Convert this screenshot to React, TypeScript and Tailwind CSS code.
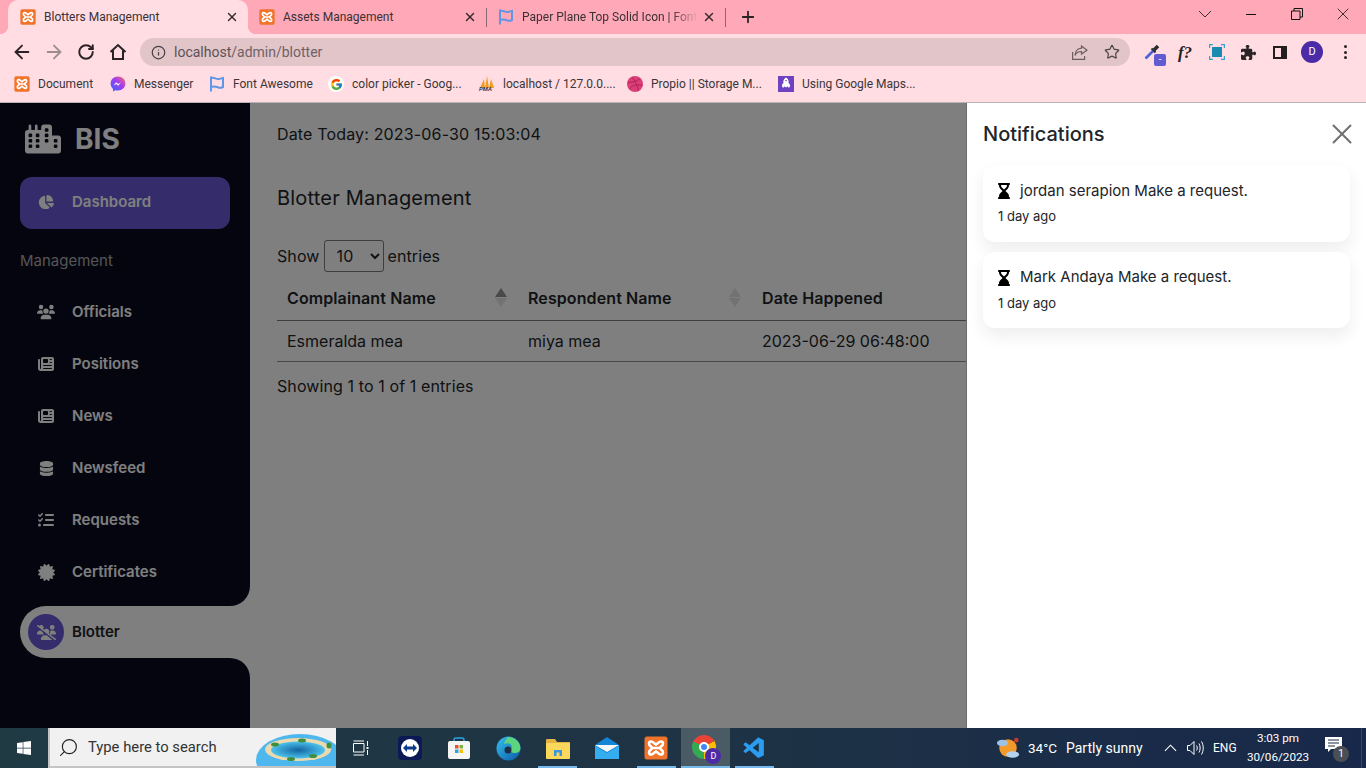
import { ArrowLeft, ArrowRight, Info, Plus, RotateCw, Search, Star, X } from "lucide-react";
import {
  FaCertificate,
  FaChartPie,
  FaCity,
  FaDatabase,
  FaHourglassEnd,
  FaListCheck,
  FaNewspaper,
  FaPuzzlePiece,
  FaRocket,
  FaUsers,
  FaUsersSlash,
  FaWindows,
} from "react-icons/fa6";
import { FcGoogle } from "react-icons/fc";
import { VscVscode } from "react-icons/vsc";

function Xampp({ size = 16 }: { size?: number }) {
  return (
    <svg width={size} height={size} viewBox="0 0 24 24" className="shrink-0">
      <rect x="0.5" y="0.5" width="23" height="23" rx="2.5" fill="#f0742b" />
      <path
        d="M7 5.5C4.5 5.5 4.5 9 6.5 10L8.5 12L6.5 14C4.5 15 4.5 18.5 7 18.5C9 18.5 10 16.5 12 15.5C14 16.5 15 18.5 17 18.5C19.5 18.5 19.5 15 17.5 14L15.5 12L17.5 10C19.5 9 19.5 5.5 17 5.5C15 5.5 14 7.5 12 8.5C10 7.5 9 5.5 7 5.5ZM8 12H16"
        fill="none"
        stroke="#fff"
        strokeWidth="2.6"
      />
    </svg>
  );
}

function FaFlag() {
  return (
    <svg width="16" height="16" viewBox="0 0 16 16" className="shrink-0" fill="none" stroke="#5f96e6" strokeWidth="2">
      <path d="M2 .5V15.500M2 2C5 .8 7 3.500 10 3 11.500 2.800 13 2.300 14 2V11C12.500 11.800 11 12 9.500 11.500 7 10.500 4.500 10.200 2 11" />
    </svg>
  );
}

function Messenger() {
  return (
    <svg width="16" height="16" viewBox="0 0 16 16" className="shrink-0">
      <defs>
        <linearGradient id="msg" x1="0" y1="1" x2="1" y2="0">
          <stop offset="0" stopColor="#2f6bff" />
          <stop offset="0.55" stopColor="#a33bf0" />
          <stop offset="1" stopColor="#ff6a6a" />
        </linearGradient>
      </defs>
      <path d="M8 .5C3.800.5.6 3.500.6 7.600c0 2.200.9 4 2.400 5.300V15.500l2.300-1.300c.8.3 1.700.4 2.700.4 4.200 0 7.400-3 7.400-7S12.200.5 8 .5Z" fill="url(#msg)" />
      <path d="M3.500 9.800 6 6.200l2.300 1.700 2.600-1.700-2.500 3.600-2.300-1.700Z" fill="#fff" />
    </svg>
  );
}

function Dribbble() {
  return (
    <svg width="16" height="16" viewBox="0 0 16 16" className="shrink-0" fill="none">
      <circle cx="8" cy="8" r="8" fill="#dc3d78" />
      <path d="M5 1C8 4.500 10.500 9.500 11.500 15M1 6.500C5 6.500 9.500 5.800 13 2.500M2.500 13C4.500 9.500 9 8 15.500 9.500" stroke="#a9224f" strokeWidth="0.9" />
    </svg>
  );
}

function Pma() {
  return (
    <div className="relative h-4 w-4 shrink-0">
      <svg width="16" height="12" viewBox="0 0 16 12">
        <path d="M1 12 5 3 6 12ZM6 12 8 0 10 12ZM10 12 12 3 15 12Z" fill="#f39a1f" />
      </svg>
      <span className="absolute left-0 top-[10px] text-[6px] leading-[6px] font-bold italic text-[#33416b]">PMA</span>
    </div>
  );
}

function Bookmark({ icon, label, w }: { icon: React.ReactNode; label: string; w: string }) {
  return (
    <div className={`flex items-center gap-2 ${w}`}>
      <div className="flex w-4 justify-center">{icon}</div>
      <span className="whitespace-nowrap text-[12px] text-[#3b3538]">{label}</span>
    </div>
  );
}

function Tab({ title, active, fade, w }: { title: string; active?: boolean; fade?: boolean; w: string }) {
  return (
    <div className={`relative flex h-[34px] items-center pr-[9px] ${w} ${active ? "rounded-t-[10px] bg-[#ffdde3] pl-3" : "pl-[11px]"}`}>
      {active && (
        <>
          <span className="absolute -left-2 bottom-0 h-2 w-2 bg-[radial-gradient(circle_at_0_0,transparent_8px,#ffdde3_8px)]" />
          <span className="absolute -right-2 bottom-0 h-2 w-2 bg-[radial-gradient(circle_at_100%_0,transparent_8px,#ffdde3_8px)]" />
        </>
      )}
      {fade ? <FaFlag /> : <Xampp />}
      <span
        className={`ml-2 flex-1 overflow-hidden whitespace-nowrap text-[12px] text-[#3a3033] ${
          fade ? "[mask-image:linear-gradient(to_right,#000_85%,transparent)]" : ""
        }`}
      >
        {title}
      </span>
      <X size={14} strokeWidth={2.4} className="ml-1 shrink-0 text-[#33292c]" />
    </div>
  );
}

function ToolSlot({ children, w = "w-8" }: { children: React.ReactNode; w?: string }) {
  return <div className={`flex shrink-0 items-center justify-center ${w}`}>{children}</div>;
}

function BrowserChrome() {
  return (
    <header className="shrink-0 font-['Roboto',sans-serif]">
      <div className="flex h-[34px] items-start bg-[#ffa8b8] pl-2">
        <Tab title="Blotters Management" active w="w-[240px]" />
        <Tab title="Assets Management" w="w-[238px]" />
        <div className="mt-[8px] h-[19px] w-px bg-[#8a6a70]" />
        <Tab title="Paper Plane Top Solid Icon | Font" fade w="w-[238px]" />
        <div className="mt-[8px] h-[19px] w-px bg-[#8a6a70]" />
        <div className="flex h-[34px] w-[44px] items-center justify-center">
          <Plus size={18} strokeWidth={2.4} className="text-[#2a2326]" />
        </div>
        <div className="ml-auto flex h-[28px] items-center text-[#2c2326]">
          <div className="flex w-[46px] justify-center">
            <svg width="14" height="8" viewBox="0 0 14 8" fill="none" stroke="#3a2f32">
              <path d="M1 1 7 7 13 1" />
            </svg>
          </div>
          <div className="flex w-[46px] justify-center">
            <span className="h-px w-[10px] bg-[#111]" />
          </div>
          <div className="flex w-[46px] justify-center">
            <svg width="12" height="12" viewBox="0 0 12 12" fill="none" stroke="#111">
              <path d="M.5 3H9V11.500H.5ZM3 3V.5H11.500V9H9" />
            </svg>
          </div>
          <div className="flex w-[46px] justify-center">
            <X size={20} strokeWidth={1.1} />
          </div>
        </div>
      </div>

      <div className="flex h-[34px] items-center bg-[#ffdde3] pt-[2px] pl-[6px]">
        <ToolSlot>
          <ArrowLeft size={22} strokeWidth={2} className="text-[#2b2226]" />
        </ToolSlot>
        <ToolSlot>
          <ArrowRight size={22} strokeWidth={2} className="text-[#9e8c91]" />
        </ToolSlot>
        <ToolSlot>
          <RotateCw size={18} strokeWidth={2.6} className="text-[#2b2226]" />
        </ToolSlot>
        <ToolSlot>
          <svg width="18" height="18" viewBox="0 0 18 18" fill="none" stroke="#2b2226" strokeWidth="2">
            <path d="M1.500 9 9 2l7.500 7M4 7.500V16h10V7.500" />
          </svg>
        </ToolSlot>
        <div className="ml-[6px] flex h-7 w-[990px] items-center rounded-full bg-[#e1c5c9] pl-[11px] pr-[10px]">
          <Info size={15} strokeWidth={2} className="text-[#4a4043]" />
          <span className="ml-[8px] text-[14px] text-[#5e5155]">
            localhost<span className="text-[#6f6165]">/admin/blotter</span>
          </span>
          <svg width="16" height="15" viewBox="0 0 16 15" fill="none" stroke="#6b5f62" strokeWidth="1.200" className="ml-auto">
            <path d="M.6 7v7.400h12V11M9.500 1l5.500 4.200L9.500 9V6.500C6 6.500 4 8 3 10.500 3 6.500 5.500 3.500 9.500 3.200Z" />
          </svg>
          <Star size={16} strokeWidth={1.8} className="ml-4 text-[#4f4447]" />
        </div>
        <div className="flex flex-1 items-center pl-[7px]">
          <ToolSlot>
            <div className="relative h-[22px] w-[22px]">
              <svg width="16" height="16" viewBox="0 0 16 16" fill="none" className="absolute left-[2px] top-[3px]">
                <path d="M1.500 14.500 9 7" stroke="#4c63d8" strokeWidth="2.600" />
                <path d="M7.500 4.500 11.500 8.500" stroke="#2b2b33" strokeWidth="2" />
                <path d="M10 6 14 2" stroke="#2b2b33" strokeWidth="3.600" />
              </svg>
              <span className="absolute left-[12px] top-[13px] flex h-3 w-3 items-center justify-center rounded-[2px] bg-[#625ad0] text-[8px] font-bold leading-none text-white">-</span>
            </div>
          </ToolSlot>
          <ToolSlot>
            <span className="font-['Liberation_Serif',serif] text-[17px] font-bold italic leading-none text-[#222]">f?</span>
          </ToolSlot>
          <ToolSlot w="w-[31px]">
            <svg width="16" height="16" viewBox="0 0 16 16" fill="none" stroke="#3aa0c8" strokeWidth="1.200">
              <path d="M.6 4V.6H4M12 .6h3.400V4M15.400 12v3.400H12M4 15.400H.6V12" />
              <rect x="3" y="3" width="10" height="10" fill="#1a8bb0" stroke="none" />
            </svg>
          </ToolSlot>
          <ToolSlot>
            <FaPuzzlePiece size={15} className="text-[#2a2326]" />
          </ToolSlot>
          <ToolSlot>
            <div className="h-[13px] w-[14px] border-2 border-r-[6px] border-[#241e21] bg-[#ffdde3]" />
          </ToolSlot>
          <ToolSlot>
            <div className="flex h-[22px] w-[22px] items-center justify-center rounded-full bg-[#4c2ba6] text-[11px] text-white">D</div>
          </ToolSlot>
          <ToolSlot w="w-[34px]">
            <div className="flex flex-col gap-[2.500px]">
              <span className="h-[3px] w-[3px] rounded-full bg-[#2a2326]" />
              <span className="h-[3px] w-[3px] rounded-full bg-[#2a2326]" />
              <span className="h-[3px] w-[3px] rounded-full bg-[#2a2326]" />
            </div>
          </ToolSlot>
        </div>
      </div>

      <div className="flex h-[35px] items-center border-b border-[#bcb2b5] bg-[#ffdde3] pb-[2px] pl-[14px]">
        <Bookmark icon={<Xampp />} label="Document" w="w-[96px]" />
        <Bookmark icon={<Messenger />} label="Messenger" w="w-[99px]" />
        <Bookmark icon={<FaFlag />} label="Font Awesome" w="w-[119px]" />
        <Bookmark
          icon={
            <span className="flex h-4 w-4 items-center justify-center rounded-full bg-white">
              <FcGoogle size={13} />
            </span>
          }
          label="color picker - Goog..."
          w="w-[151px]"
        />
        <Bookmark icon={<Pma />} label="localhost / 127.0.0...." w="w-[148px]" />
        <Bookmark icon={<Dribbble />} label="Propio || Storage M..." w="w-[151px]" />
        <Bookmark
          icon={
            <span className="flex h-4 w-4 items-center justify-center bg-[#6f42c1]">
              <FaRocket size={10} className="-rotate-45 text-white" />
            </span>
          }
          label="Using Google Maps..."
          w="w-[150px]"
        />
      </div>
    </header>
  );
}

function NavItem({ icon, label }: { icon: React.ReactNode; label: string }) {
  return (
    <div className="flex h-[52px] items-center pl-5">
      <div className="flex w-[52px] justify-center text-white">{icon}</div>
      <span className="text-[15px] font-semibold text-white">{label}</span>
    </div>
  );
}

function Sidebar() {
  return (
    <aside className="flex w-[250px] shrink-0 flex-col">
      <div className="rounded-br-[20px] bg-[#0b0b20] pb-[8px]">
        <div className="flex h-[74px] items-center pb-[3px] pl-[25px]">
          <FaCity size={36} className="text-white" />
          <span className="ml-[14px] text-[28px] font-bold leading-none text-white">BIS</span>
        </div>
        <div className="mx-5 flex h-[52px] items-center rounded-xl bg-[#6a5bd6] pb-[2px]">
          <div className="flex w-[52px] justify-center text-white">
            <FaChartPie size={16} />
          </div>
          <span className="text-[15px] font-semibold text-white">Dashboard</span>
        </div>
        <p className="flex h-[57px] items-center pl-5 pt-[7px] text-[15px] text-[#aaa]">Management</p>
        <NavItem icon={<FaUsers size={18} />} label="Officials" />
        <NavItem icon={<FaNewspaper size={16} />} label="Positions" />
        <NavItem icon={<FaNewspaper size={16} />} label="News" />
        <NavItem icon={<FaDatabase size={15} />} label="Newsfeed" />
        <NavItem icon={<FaListCheck size={16} />} label="Requests" />
        <NavItem icon={<FaCertificate size={17} />} label="Certificates" />
      </div>
      <div className="flex h-[52px] bg-[#0b0b20]">
        <div className="ml-5 flex flex-1 items-center rounded-l-[26px] bg-white pl-2">
          <div className="flex h-9 w-9 items-center justify-center rounded-full bg-[#6a5bd6] text-white">
            <FaUsersSlash size={19} />
          </div>
          <span className="ml-2 text-[15px] font-semibold text-[#212529]">Blotter</span>
        </div>
      </div>
      <div className="flex-1 rounded-tr-[20px] bg-[#0b0b20]" />
    </aside>
  );
}

function SortArrows({ active }: { active?: boolean }) {
  return (
    <div className="absolute right-[11px] top-[12px] flex flex-col gap-px">
      <div className={`h-0 w-0 border-x-[6px] border-b-[9px] border-x-transparent ${active ? "border-b-[#212529]/50" : "border-b-[#212529]/12"}`} />
      <div className="h-0 w-0 border-x-[6px] border-t-[9px] border-x-transparent border-t-[#212529]/12" />
    </div>
  );
}

function Main() {
  return (
    <main className="flex-1 overflow-hidden pl-[27px] text-base text-[#212529]">
      <p className="pt-[19px] leading-6 tracking-[0.16px]">Date Today: 2023-06-30 15:03:04</p>
      <h2 className="mt-[40px] text-[20px] leading-6 tracking-[0.2px]">Blotter Management</h2>
      <div className="mt-[30px] flex h-8 items-center tracking-[0.1px]">
        <span>Show</span>
        <select defaultValue="10" className="ml-1 mr-1 h-8 w-[60px] rounded-[3px] border border-[#212529]/60 pl-2">
          <option>10</option>
        </select>
        <span>entries</span>
      </div>
      <table className="mt-[4px] w-[860px] table-fixed border-collapse">
        <thead>
          <tr className="h-[44px] border-b border-[#212529]/60 text-left tracking-[0.1px]">
            <th className="relative w-[241px] pl-[10px] font-semibold">Complainant Name<SortArrows active /></th>
            <th className="relative w-[234px] pl-[10px] font-semibold">Respondent Name<SortArrows /></th>
            <th className="pl-[10px] font-semibold">Date Happened</th>
          </tr>
        </thead>
        <tbody>
          <tr className="h-[41px] border-b border-[#212529]/50">
            <td className="pl-[10px]">Esmeralda mea</td>
            <td className="pl-[10px]">miya mea</td>
            <td className="pl-[10px]">2023-06-29 06:48:00</td>
          </tr>
        </tbody>
      </table>
      <p className="mt-[12px] leading-6 tracking-[0.1px]">Showing 1 to 1 of 1 entries</p>
    </main>
  );
}

function NotificationCard({ text }: { text: string }) {
  return (
    <div className="h-[76.5px] rounded-xl bg-white px-[15px] pt-[14px] shadow-[0_8px_16px_rgba(33,37,41,0.08)]">
      <div className="flex h-[24px] items-center">
        <FaHourglassEnd size={16} className="-ml-[2px] text-black" />
        <span className="ml-2 text-[15px] text-[#212529]">{text}</span>
      </div>
      <p className="mt-[3px] text-[13px] leading-5 text-[#212529]">1 day ago</p>
    </div>
  );
}

function Offcanvas() {
  return (
    <div className="absolute inset-y-0 right-0 w-[400px] border-l border-[#6b6b6b] bg-white pl-4 pr-4">
      <div className="flex h-[62px] items-center justify-between">
        <h3 className="text-[20px] font-medium leading-6 text-[#212529]">Notifications</h3>
        <X size={34} strokeWidth={1.4} className="-mr-[9px] text-[#707070]" />
      </div>
      <div className="flex flex-col gap-[10px]">
        <NotificationCard text="jordan serapion Make a request." />
        <NotificationCard text="Mark Andaya Make a request." />
      </div>
    </div>
  );
}

function TaskSlot({ children, open, active }: { children: React.ReactNode; open?: boolean; active?: boolean }) {
  return (
    <div className={`relative flex h-10 w-[49.25px] items-center justify-center ${active ? "bg-[#4b5b66]" : ""}`}>
      {children}
      {open && <span className={`absolute bottom-0 h-[2px] bg-[#76b9ed] ${active ? "inset-x-0" : "inset-x-[5px]"}`} />}
    </div>
  );
}

function Taskbar() {
  return (
    <footer className="flex h-10 shrink-0 items-center bg-gradient-to-r from-[#203a44] via-[#1e3344] to-[#18284a] font-['Roboto',sans-serif] text-white">
      <div className="flex h-10 w-12 items-center justify-center">
        <FaWindows size={16} />
      </div>
      <div className="flex h-10 w-[288px] items-center overflow-hidden border-b-2 border-l-2 border-[#c4c4c4] bg-[#f1f1f1] pl-[8px]">
        <Search size={21} strokeWidth={1.3} className="-scale-x-100 text-[#222]" />
        <span className="ml-[9px] text-[14.800px] text-[#333]">Type here to search</span>
        <svg width="80" height="32" viewBox="0 0 80 32" className="ml-auto shrink-0 self-end">
          <defs>
            <radialGradient id="lagoon">
              <stop offset="0" stopColor="#14649f" />
              <stop offset="1" stopColor="#4cc3ee" />
            </radialGradient>
          </defs>
          <ellipse cx="44" cy="26" rx="44" ry="26" fill="#4eb8ee" />
          <ellipse cx="42" cy="15.500" rx="33" ry="11.500" fill="#ecd9ae" />
          <ellipse cx="42" cy="16" rx="27" ry="8.500" fill="url(#lagoon)" />
          <ellipse cx="19" cy="10.500" rx="4" ry="2" fill="#3f8f3f" />
          <ellipse cx="46" cy="6.500" rx="4" ry="2" fill="#3f8f3f" />
          <ellipse cx="73" cy="11.500" rx="2.500" ry="3" fill="#3f8f3f" />
          <ellipse cx="35" cy="25" rx="4" ry="2" fill="#3f8f3f" />
          <ellipse cx="57" cy="22" rx="4" ry="2" fill="#3f8f3f" />
        </svg>
      </div>
      <TaskSlot>
        <svg width="16" height="16" viewBox="0 0 16 16" fill="none" stroke="#fff">
          <path d="M.5 3.500H11V12H.5ZM.5 1H11M.5 15H11M14.500 1V6M14.500 10V15" />
          <rect x="13.500" y="7" width="2" height="2" fill="#fff" stroke="none" />
        </svg>
      </TaskSlot>
      <TaskSlot>
        <div className="flex h-6 w-6 items-center justify-center rounded bg-[#0b1a55]">
          <div className="relative flex h-[18px] w-[18px] items-center justify-center rounded-full bg-white">
            <svg width="14" height="8" viewBox="0 0 14 8" fill="#0e3a8a">
              <path d="M0 4 4 0V2.500H10V0L14 4 10 8V5.500H4V8Z" />
            </svg>
          </div>
        </div>
      </TaskSlot>
      <TaskSlot>
        <svg width="24" height="24" viewBox="0 0 24 24">
          <path d="M7 6V4a2 2 0 0 1 2-2h6a2 2 0 0 1 2 2v2" fill="none" stroke="#2aa3e0" strokeWidth="1.500" />
          <rect x="1" y="5" width="22" height="18" rx="2" fill="#f5f5f5" />
          <rect x="8" y="9" width="3.500" height="3.500" fill="#e8512f" />
          <rect x="12.500" y="9" width="3.500" height="3.500" fill="#7cb342" />
          <rect x="8" y="13.500" width="3.500" height="3.500" fill="#2aa3e0" />
          <rect x="12.500" y="13.500" width="3.500" height="3.500" fill="#fbbc05" />
        </svg>
      </TaskSlot>
      <TaskSlot>
        <svg width="25" height="25" viewBox="0 0 25 25">
          <defs>
            <linearGradient id="edge" x1="0" y1="0" x2="1" y2="1">
              <stop offset="0" stopColor="#35c1f1" />
              <stop offset="1" stopColor="#0c59a4" />
            </linearGradient>
          </defs>
          <circle cx="12.500" cy="12.500" r="12" fill="url(#edge)" />
          <path d="M12 1C18 1 24 5 24.500 12c0 3-2.500 5-6 5-2.500 0-4-1-4-2.500 0-2 2-2.500 1-5C14.500 7 11 6.500 8 8 9 4 11 2 12 1Z" fill="#5fd47e" />
          <circle cx="12" cy="14" r="3.500" fill="#1c2f44" />
        </svg>
      </TaskSlot>
      <TaskSlot open>
        <svg width="24" height="22" viewBox="0 0 24 22">
          <path d="M0 3a1 1 0 0 1 1-1h8l2 3h13v3H0Z" fill="#e3b341" />
          <rect y="6" width="24" height="16" rx="1" fill="#fbd75b" />
          <rect x="8" y="13" width="8" height="6" fill="#3a96dd" />
          <rect x="10.500" y="15.500" width="3" height="3.500" fill="#fbd75b" />
        </svg>
      </TaskSlot>
      <TaskSlot>
        <svg width="24" height="22" viewBox="0 0 24 22">
          <path d="M0 8 12 0 24 8V22H0Z" fill="#1285d6" />
          <path d="M0 8H24L12 15Z" fill="#f4f7fa" />
          <path d="M0 22V9L12 16 24 9V22Z" fill="#35aef0" />
        </svg>
      </TaskSlot>
      <TaskSlot open>
        <Xampp size={24} />
      </TaskSlot>
      <TaskSlot open active>
        <div className="relative h-[26px] w-[26px]">
          <div className="h-[24px] w-[24px] rounded-full bg-[conic-gradient(#ea4335_0deg_60deg,#fbbc05_60deg_180deg,#34a853_180deg_300deg,#ea4335_300deg)]" />
          <div className="absolute left-[7px] top-[7px] h-[10px] w-[10px] rounded-full border-2 border-white bg-[#4285f4]" />
          <span className="absolute -bottom-[3px] -right-[3px] flex h-4 w-4 items-center justify-center rounded-full bg-[#4c2ba6] text-[9px] leading-none text-white">D</span>
        </div>
      </TaskSlot>
      <TaskSlot open>
        <VscVscode size={25} className="text-[#2a9df0]" />
      </TaskSlot>

      <div className="ml-auto flex h-10 w-[370px] items-center">
        <svg width="24" height="24" viewBox="0 0 26 24" className="shrink-0">
          <circle cx="22" cy="3.500" r="2.500" fill="#c93a2c" />
          <circle cx="13" cy="12" r="9.500" fill="#f39a2b" />
          <ellipse cx="7" cy="6.500" rx="6" ry="3.500" fill="#9cc3e6" />
          <ellipse cx="18" cy="19" rx="7" ry="3.500" fill="#b5d3ee" />
        </svg>
        <span className="ml-2 w-[38px] text-[13.500px]">34°C</span>
        <span className="w-[98px] text-[14px]">Partly sunny</span>
        <svg width="13" height="8" viewBox="0 0 14 8" fill="none" stroke="#fff" strokeWidth="1.200" className="shrink-0">
          <path d="M1 7 7 1 13 7" />
        </svg>
        <svg width="17" height="16" viewBox="0 0 17 16" fill="none" stroke="#fff" className="ml-[10px] shrink-0">
          <path d="M.5 5.500H3L7 1.500V14.500L3 10.500H.5ZM9.500 5.500C10.500 7 10.500 9 9.500 10.500M12 3.500C13.500 6 13.500 10 12 12.500M14.500 1.500C16.800 5.500 16.800 10.500 14.500 14.500" />
        </svg>
        <span className="ml-[9px] w-[25px] text-[12px]">ENG</span>
        <div className="ml-[11px] flex w-[58px] flex-col items-center text-[11.700px] leading-[19px]">
          <span>3:03 pm</span>
          <span>30/06/2023</span>
        </div>
        <div className="relative ml-[18px] h-[22px] w-[24px]">
          <svg width="17" height="16" viewBox="0 0 17 16" fill="#fff">
            <path d="M0 0H17V12H6L3 15V12H0Z" />
            <path d="M3 3H14M3 6H14M3 9H10" stroke="#1a2a45" strokeWidth="1" />
          </svg>
          <span className="absolute -bottom-[3px] right-0 flex h-4 w-4 items-center justify-center rounded-full bg-[#4a4f55] text-[10px] leading-none">1</span>
        </div>
        <span className="ml-auto mr-[4px] h-10 w-px bg-white/15" />
      </div>
    </footer>
  );
}

export default function App() {
  return (
    <div className="flex h-[768px] w-[1366px] flex-col overflow-hidden font-['Inter',sans-serif]">
      <BrowserChrome />
      <div className="relative flex min-h-0 flex-1 bg-white">
        <Sidebar />
        <Main />
        <div className="absolute inset-0 bg-black/50" />
        <Offcanvas />
      </div>
      <Taskbar />
    </div>
  );
}
